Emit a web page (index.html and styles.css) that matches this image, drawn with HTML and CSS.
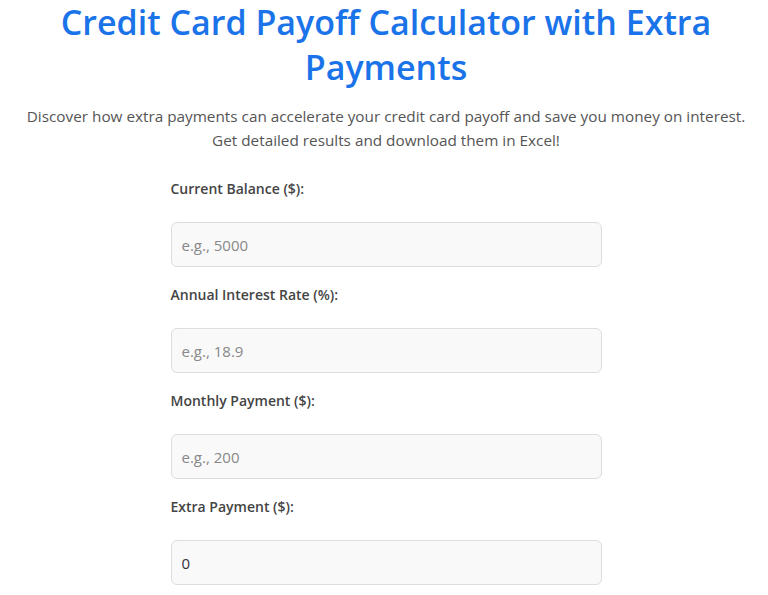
FILE: index.html
```html
<!DOCTYPE html>
<html lang="en">
<head>
<meta charset="utf-8">
<title>Credit Card Payoff Calculator with Extra Payments</title>
<link rel="stylesheet" href="styles.css">
</head>
<body>
<div class="page">
  <h1 class="title">Credit Card Payoff Calculator with Extra Payments</h1>
  <p class="intro">Discover how extra payments can accelerate your credit card payoff and save you money on interest. Get detailed results and download them in Excel!</p>
  <form class="calc">
    <div class="field">
      <label class="label" for="balance">Current Balance ($):</label>
      <input class="input" id="balance" type="text" placeholder="e.g., 5000">
    </div>
    <div class="field">
      <label class="label" for="rate">Annual Interest Rate (%):</label>
      <input class="input" id="rate" type="text" placeholder="e.g., 18.9">
    </div>
    <div class="field">
      <label class="label" for="monthly">Monthly Payment ($):</label>
      <input class="input" id="monthly" type="text" placeholder="e.g., 200">
    </div>
    <div class="field">
      <label class="label" for="extra">Extra Payment ($):</label>
      <input class="input" id="extra" type="text" value="0">
    </div>
  </form>
</div>
</body>
</html>
```
FILE: styles.css
```css
html, body {
  margin: 0;
  padding: 0;
  background: #ffffff;
}
body {
  font-family: "Open Sans", "Noto Sans", "Liberation Sans", sans-serif;
  color: #333;
}
.page {
  padding: 0 18px 0 22px;
  text-align: center;
}
.title {
  margin: 0;
  padding-top: 0;
  font-size: 34px;
  line-height: 45px;
  font-weight: 600;
  color: #1a73e8;
}
.intro {
  margin: 14px 0 0;
  font-size: 15.3px;
  line-height: 24px;
  color: #555;
}
.calc {
  width: 431px;
  margin: 27px auto 0;
  text-align: left;
  display: flex;
  flex-direction: column;
  gap: 18px;
}
.field {
  display: flex;
  flex-direction: column;
  gap: 23px;
}
.label {
  font-size: 14px;
  font-weight: 600;
  color: #444;
  line-height: 20px;
}
.input {
  box-sizing: border-box;
  height: 45px;
  padding: 0 10px;
  border: 1px solid #ddd;
  border-radius: 6px;
  background: #f9f9f9;
  font-family: inherit;
  font-size: 15px;
  color: #333;
}
.input::placeholder {
  color: #888;
}
```
